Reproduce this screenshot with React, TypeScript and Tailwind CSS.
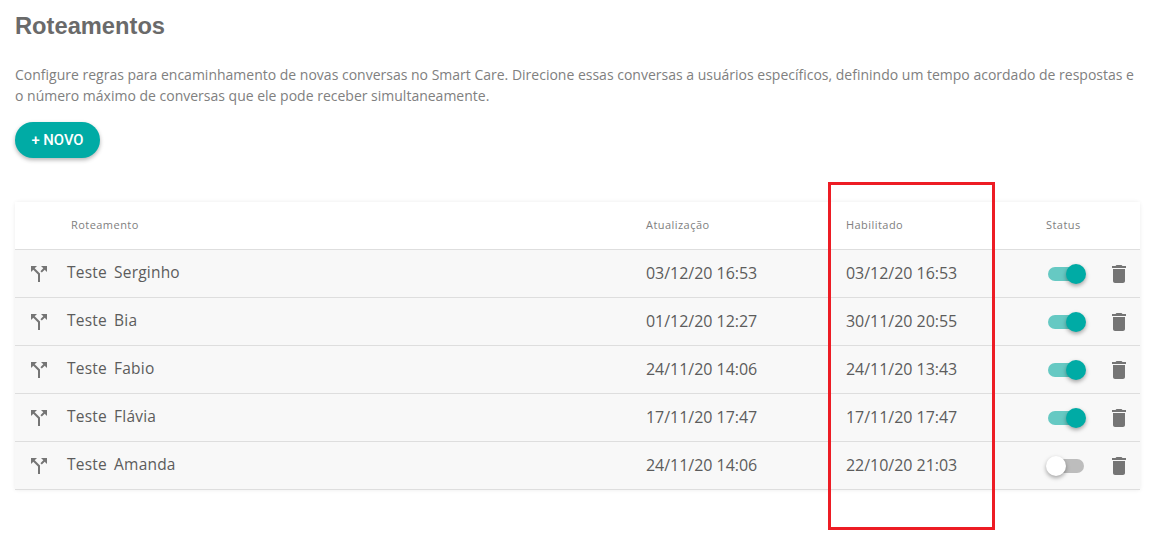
const rows = [
  { name: 'Teste Serginho', updated: '03/12/20 16:53', enabled: '03/12/20 16:53', on: true },
  { name: 'Teste Bia', updated: '01/12/20 12:27', enabled: '30/11/20 20:55', on: true },
  { name: 'Teste Fabio', updated: '24/11/20 14:06', enabled: '24/11/20 13:43', on: true },
  { name: 'Teste Flávia', updated: '17/11/20 17:47', enabled: '17/11/20 17:47', on: true },
  { name: 'Teste Amanda', updated: '24/11/20 14:06', enabled: '22/10/20 21:03', on: false },
];

function SplitIcon() {
  return (
    <svg width="24" height="24" viewBox="0 0 24 24" fill="#757575">
      <path d="M14 4l2.29 2.29-2.88 2.88 1.42 1.42 2.88-2.88L20 10V4zm-4 0H4v6l2.29-2.29 4.71 4.7V20h2v-8.41l-5.29-5.3z" />
    </svg>
  );
}

function TrashIcon() {
  return (
    <svg width="24" height="24" viewBox="0 0 24 24" fill="#757575">
      <path d="M6 19c0 1.1.9 2 2 2h8c1.1 0 2-.9 2-2V7H6v12zM19 4h-3.5l-1-1h-5l-1 1H5v2h14V4z" />
    </svg>
  );
}

function Toggle({ on }: { on: boolean }) {
  return (
    <div className="relative w-[36px] h-[14px]">
      <div className={`w-full h-full rounded-full ${on ? 'bg-[#66c9c3]' : 'bg-[#bdbdbd]'}`} />
      <div
        className={`absolute top-[-3px] w-[20px] h-[20px] rounded-full shadow-[0_2px_4px_rgba(0,0,0,0.35)] ${
          on ? 'left-[18px] bg-[#00aba5]' : 'left-[-2px] bg-white'
        }`}
      />
    </div>
  );
}

export default function App() {
  return (
    <div className="relative h-[541px] bg-white overflow-hidden px-[15px] font-['Open_Sans',sans-serif]">
      <h1 className="pt-[13px] h-[64px] text-[23.7px] leading-[26px] font-bold text-[#6a6a6a] font-['Liberation_Sans',sans-serif]">
        Roteamentos
      </h1>

      <p className="text-[14px] leading-[21px] text-[#808080] w-[1125px]">
        Configure regras para encaminhamento de novas conversas no Smart Care. Direcione essas conversas a usuários
        específicos, definindo um tempo acordado de respostas e o número máximo de conversas que ele pode receber
        simultaneamente.
      </p>

      <button className="mt-[16px] block w-[85px] h-[36px] rounded-full bg-[#00aba5] text-white text-[14.8px] font-medium font-['Roboto',sans-serif] shadow-[0_2px_4px_rgba(0,0,0,0.3)]">
        + NOVO
      </button>

      <div className="mt-[44px] w-[1125px] rounded-t-[4px] shadow-[0_0_4px_rgba(0,0,0,0.08)]">
        {/* Header */}
        <div className="flex items-center h-[48px] border-b border-[#dedede] text-[11px] tracking-[0.45px] text-[#808080] bg-white">
          <div className="w-[56px]" />
          <div className="w-[575px]">Roteamento</div>
          <div className="w-[200px]">Atualização</div>
          <div className="w-[200px]">Habilitado</div>
          <div>Status</div>
        </div>

        {/* Rows */}
        {rows.map((row) => (
          <div key={row.name} className="flex items-center h-[48px] border-b border-[#dedede] bg-[#f8f8f8] text-[#5c5c5c]">
            <div className="w-[52px] pl-[12px]">
              <SplitIcon />
            </div>
            <div className="w-[579px] pb-[2px] text-[15.5px] tracking-[0.2px] [word-spacing:3px]">{row.name}</div>
            <div className="w-[200px] pb-[1px] text-[16px] tracking-[-0.03px]">{row.updated}</div>
            <div className="w-[202px] pb-[1px] text-[16px] tracking-[-0.03px]">{row.enabled}</div>
            <Toggle on={row.on} />
            <div className="ml-[23px]">
              <TrashIcon />
            </div>
          </div>
        ))}
      </div>

      {/* Annotation frame */}
      <div className="absolute left-[828px] top-[182px] w-[167px] h-[348px] border-[3px] border-[#ed1c24]" />
    </div>
  );
}
